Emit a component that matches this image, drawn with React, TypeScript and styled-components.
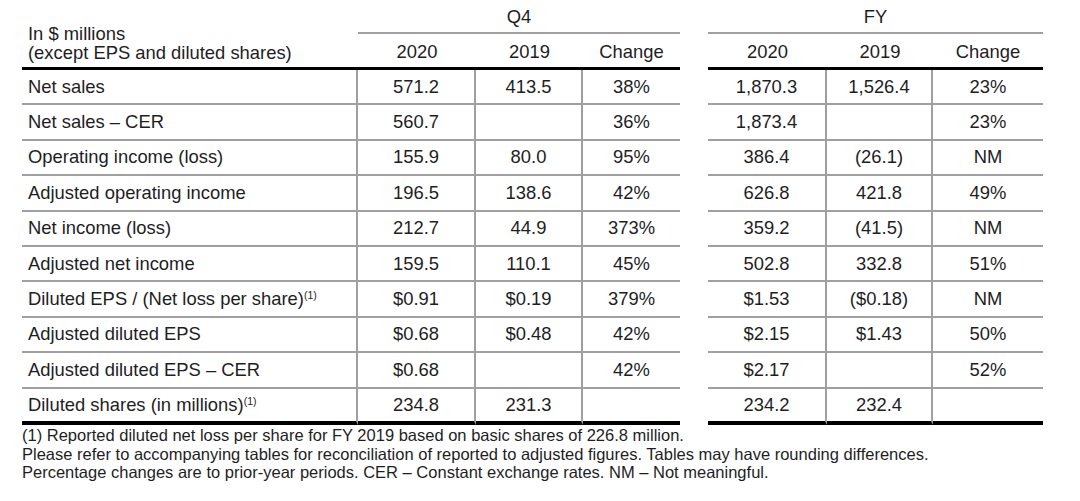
import React from "react";
import styled, { createGlobalStyle } from "styled-components";

const Global = createGlobalStyle`
  html, body { margin: 0; padding: 0; background: #ffffff; }
  body { font-family: "Liberation Sans", Arial, sans-serif; color: #1e1e1e; }
`;

const COLS = "336px 118px 107px 97px 28px 119px 106px 110px";
const GRAY = "#a0a0a0";

const Page = styled.div`
  padding: 0 0 0 22px;
  width: 1021px;
`;

const Header = styled.div`
  display: grid;
  grid-template-columns: ${COLS};
  grid-template-rows: 34px 36px;
  font-size: 18.4px;
`;

const HeaderLabel = styled.div`
  grid-column: 1;
  grid-row: 1 / 3;
  border-bottom: 3px solid #000;
  display: flex;
  flex-direction: column;
  justify-content: flex-end;
  padding: 0 0 5px 6px;
  line-height: 19px;
`;

const GroupTitle = styled.div<{ $col: string }>`
  grid-column: ${(p) => p.$col};
  grid-row: 1;
  border-bottom: 2px solid ${GRAY};
  display: flex;
  align-items: center;
  justify-content: center;
  padding-top: 2px;
`;

const YearCell = styled.div<{ $col: number }>`
  grid-column: ${(p) => p.$col};
  grid-row: 2;
  border-bottom: 3px solid #000;
  display: flex;
  align-items: center;
  justify-content: center;
  padding-top: 2px;
`;

const Row = styled.div<{ $last?: boolean }>`
  display: grid;
  grid-template-columns: ${COLS};
  height: ${(p) => (p.$last ? "36.4px" : "35.4px")};
  font-size: 18.4px;
  --line: ${(p) => (p.$last ? "4px solid #000" : `2px solid ${GRAY}`)};
`;

const LabelCell = styled.div`
  border-bottom: var(--line);
  border-right: 2px solid ${GRAY};
  display: flex;
  align-items: center;
  padding-left: 6px;
  white-space: nowrap;
`;

const NumCell = styled.div<{ $divider?: boolean }>`
  border-bottom: var(--line);
  border-right: ${(p) => (p.$divider ? `2px solid ${GRAY}` : "none")};
  display: flex;
  align-items: center;
  justify-content: center;
  white-space: nowrap;
`;

const Gap = styled.div``;

const Sup = styled.span`
  font-size: 10.5px;
  position: relative;
  top: -6px;
`;

const Notes = styled.div`
  font-size: 16.5px;
  line-height: 18.6px;
  padding-top: 1px;
  white-space: nowrap;
`;

type RowData = {
  label: React.ReactNode;
  q4: [string, string, string];
  fy: [string, string, string];
};

const note = <Sup>(1)</Sup>;

const rows: RowData[] = [
  { label: "Net sales", q4: ["571.2", "413.5", "38%"], fy: ["1,870.3", "1,526.4", "23%"] },
  { label: "Net sales – CER", q4: ["560.7", "", "36%"], fy: ["1,873.4", "", "23%"] },
  { label: "Operating income (loss)", q4: ["155.9", "80.0", "95%"], fy: ["386.4", "(26.1)", "NM"] },
  { label: "Adjusted operating income", q4: ["196.5", "138.6", "42%"], fy: ["626.8", "421.8", "49%"] },
  { label: "Net income (loss)", q4: ["212.7", "44.9", "373%"], fy: ["359.2", "(41.5)", "NM"] },
  { label: "Adjusted net income", q4: ["159.5", "110.1", "45%"], fy: ["502.8", "332.8", "51%"] },
  {
    label: <span>Diluted EPS / (Net loss per share){note}</span>,
    q4: ["$0.91", "$0.19", "379%"],
    fy: ["$1.53", "($0.18)", "NM"],
  },
  { label: "Adjusted diluted EPS", q4: ["$0.68", "$0.48", "42%"], fy: ["$2.15", "$1.43", "50%"] },
  { label: "Adjusted diluted EPS – CER", q4: ["$0.68", "", "42%"], fy: ["$2.17", "", "52%"] },
  {
    label: <span>Diluted shares (in millions){note}</span>,
    q4: ["234.8", "231.3", ""],
    fy: ["234.2", "232.4", ""],
  },
];

export default function App() {
  return (
    <>
      <Global />
      <Page>
        <Header>
          <HeaderLabel>
            <div>In $ millions</div>
            <div>(except EPS and diluted shares)</div>
          </HeaderLabel>
          <GroupTitle $col="2 / 5">Q4</GroupTitle>
          <GroupTitle $col="6 / 9">FY</GroupTitle>
          <YearCell $col={2}>2020</YearCell>
          <YearCell $col={3}>2019</YearCell>
          <YearCell $col={4}>Change</YearCell>
          <YearCell $col={6}>2020</YearCell>
          <YearCell $col={7}>2019</YearCell>
          <YearCell $col={8}>Change</YearCell>
        </Header>
        {rows.map((r, i) => (
          <Row key={i} $last={i === rows.length - 1}>
            <LabelCell>{r.label}</LabelCell>
            <NumCell $divider>{r.q4[0]}</NumCell>
            <NumCell $divider>{r.q4[1]}</NumCell>
            <NumCell>{r.q4[2]}</NumCell>
            <Gap />
            <NumCell $divider>{r.fy[0]}</NumCell>
            <NumCell $divider>{r.fy[1]}</NumCell>
            <NumCell>{r.fy[2]}</NumCell>
          </Row>
        ))}
        <Notes>
          <div>(1) Reported diluted net loss per share for FY 2019 based on basic shares of 226.8 million.</div>
          <div>Please refer to accompanying tables for reconciliation of reported to adjusted figures. Tables may have rounding differences.</div>
          <div>Percentage changes are to prior-year periods. CER – Constant exchange rates. NM – Not meaningful.</div>
        </Notes>
      </Page>
    </>
  );
}
